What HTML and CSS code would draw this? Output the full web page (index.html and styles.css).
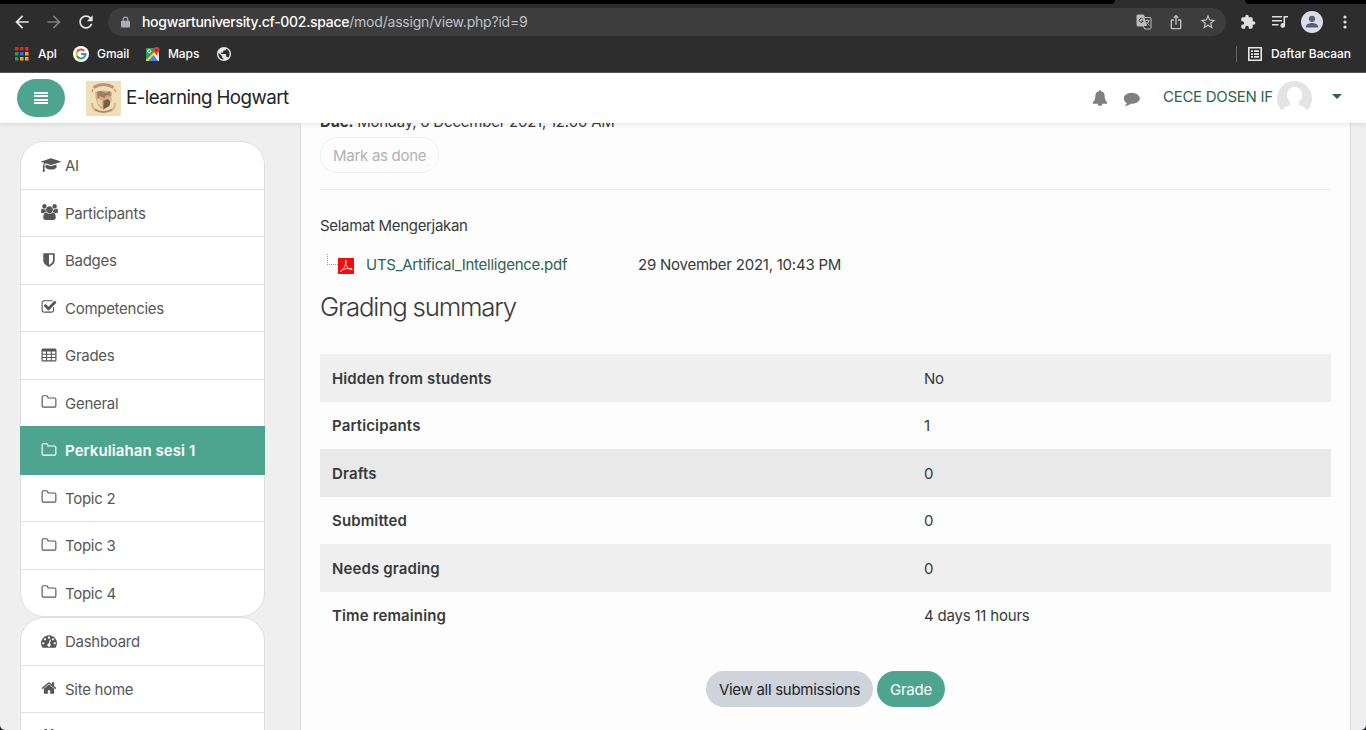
FILE: index.html
```html
<!DOCTYPE html>
<html lang="en">
<head>
<meta charset="utf-8">
<title>E-learning Hogwart</title>
<link rel="stylesheet" href="styles.css">
</head>
<body>
<svg width="0" height="0" class="defs">
  <symbol id="folder" viewBox="0 0 1792 1792"><path d="M1600 1312v-704q0-40-28-68t-68-28h-704q-40 0-68-28t-28-68v-64q0-40-28-68t-68-28h-320q-40 0-68 28t-28 68v960q0 40 28 68t68 28h1216q40 0 68-28t28-68zm128-704v704q0 92-66 158t-158 66h-1216q-92 0-158-66t-66-158v-960q0-92 66-158t158-66h320q92 0 158 66t66 158v32h672q92 0 158 66t66 158z"/></symbol>
</svg>
<div class="browser">
  <div class="tabs"><span class="tabs-left"></span><span class="tabs-right"></span></div>
  <div class="toolbar">
    <svg class="nav" viewBox="0 0 24 24"><path d="M20 11H7.83l5.59-5.59L12 4l-8 8 8 8 1.41-1.41L7.83 13H20z"/></svg>
    <svg class="nav nav-off" viewBox="0 0 24 24"><path d="M12 4l-1.41 1.41L16.17 11H4v2h12.17l-5.58 5.59L12 20l8-8z"/></svg>
    <svg class="nav" viewBox="0 0 24 24"><path d="M17.65 6.35C16.2 4.9 14.21 4 12 4c-4.42 0-7.99 3.58-7.99 8s3.57 8 7.99 8c3.73 0 6.84-2.55 7.73-6h-2.08c-.82 2.33-3.04 4-5.65 4-3.31 0-6-2.69-6-6s2.69-6 6-6c1.66 0 3.14.69 4.22 1.78L13 11h7V4z"/></svg>
    <div class="omnibox">
      <svg class="lock" viewBox="0 0 10 12"><path d="M1 4.500h8a1 1 0 0 1 1 1V11a1 1 0 0 1-1 1H1a1 1 0 0 1-1-1V5.500a1 1 0 0 1 1-1z"/><path d="M2.500 5V3a2.500 2.500 0 0 1 5 0v2" class="lock-ring"/></svg>
      <span class="url"><b>hogwartuniversity.cf-002.space</b>/mod/assign/view.php?id=9</span>
      <svg class="oi" viewBox="0 0 16 16"><path d="M1.500 1h6l1 2.500H14a1 1 0 0 1 1 1V14a1 1 0 0 1-1 1H8.500l-1-3H2a1 1 0 0 1-1-1V1.500z" fill="none" stroke="#bdbdbd"/><path d="M1 1h6.700l3.200 11H2a1 1 0 0 1-1-1z" fill="#bdbdbd"/><path d="M7 5.200A2 2 0 1 0 7.200 7H5.300" fill="none" stroke="#3d3d3d"/><path d="M9.500 6.500h4M11.500 5.500v1M13 6.500q-.8 3-3 4M10.500 8q1 2 3 3.500" fill="none" stroke="#bdbdbd"/></svg>
      <svg class="oi" viewBox="0 0 24 24"><path d="M16 5l-1.420 1.420-1.590-1.590V16h-1.980V4.830L9.420 6.420 8 5l4-4 4 4zm4 5v11c0 1.100-.9 2-2 2H6c-1.110 0-2-.9-2-2V10c0-1.110.89-2 2-2h3v2H6v11h12V10h-3V8h3c1.100 0 2 .89 2 2z"/></svg>
      <svg class="oi star" viewBox="0 0 24 24"><path d="M22 9.240l-7.190-.62L12 2 9.190 8.630 2 9.240l5.460 4.730L5.820 21 12 17.270 18.180 21l-1.630-7.030zM12 15.400l-3.760 2.270 1-4.280-3.320-2.880 4.380-.38L12 6.100l1.710 4.040 4.380.38-3.320 2.880 1 4.280z"/></svg>
    </div>
    <svg class="ext puzzle" viewBox="0 0 24 24"><path d="M20.500 11H19V7c0-1.100-.9-2-2-2h-4V3.500C13 2.120 11.880 1 10.500 1S8 2.120 8 3.500V5H4c-1.100 0-1.990.9-1.990 2v3.800H3.500c1.490 0 2.700 1.210 2.700 2.700s-1.210 2.700-2.700 2.700H2V20c0 1.100.9 2 2 2h3.800v-1.500c0-1.490 1.210-2.700 2.700-2.700s2.700 1.210 2.700 2.700V22H17c1.100 0 2-.9 2-2v-4h1.500c1.380 0 2.500-1.120 2.500-2.500S21.880 11 20.500 11z"/></svg>
    <svg class="ext queue" viewBox="0 0 16 14"><path d="M0 1h10v1.600H0zM0 5h10v1.600H0zM0 9h6.500v1.600H0zM11.500 1H16v1.600h-2.900V10.500a2.300 2.300 0 1 1-1.600-2.200z"/></svg>
    <svg class="user" viewBox="0 0 22 22"><circle cx="11" cy="11" r="11" fill="#dadde6"/><circle cx="11" cy="7.800" r="3.100" fill="#56617a"/><path d="M5 16.500v-1.500c0-2 4-3.100 6-3.100s6 1.100 6 3.100v1.500z" fill="#56617a"/></svg>
    <svg class="dots" viewBox="0 0 4 14"><circle cx="2" cy="2" r="1.600"/><circle cx="2" cy="7" r="1.600"/><circle cx="2" cy="12" r="1.600"/></svg>
  </div>
  <div class="bookmarks">
    <svg class="apps" viewBox="0 0 14 14"><path d="M0 0h3.500v3.500H0zM5 0h3.500v3.500H5zM10 0h3.500v3.500H10z" fill="#e22"/><path d="M0 5h3.500v3.500H0zM0 10h3.500v3.500H0z" fill="#19a05a"/><path d="M5 5h3.500v3.500H5z" fill="#1a73e8"/><path d="M10 5h3.500v3.500H10zM5 10h3.500v3.500H5zM10 10h3.500v3.500H10z" fill="#f9a60a"/></svg>
    <span class="bm apl">Apl</span>
    <svg class="goog" viewBox="0 0 16 16"><circle cx="8" cy="8" r="8" fill="#fff"/><g fill="none" stroke-width="2.100"><path d="M11.300 4.900A4.500 4.500 0 0 0 4 6" stroke="#ea4335"/><path d="M4 6a4.500 4.500 0 0 0 0 4" stroke="#fbbc05"/><path d="M4 10a4.500 4.500 0 0 0 7 1.400" stroke="#34a853"/><path d="M11 11.400A4.500 4.500 0 0 0 12.500 8H8" stroke="#4285f4"/></g></svg>
    <span class="bm gmail">Gmail</span>
    <svg class="maps" viewBox="0 0 15 15"><path d="M1 1h13v13H1z" fill="#2b9f57"/><path d="M1 14L8 7l6 7z" fill="#4285f4"/><path d="M8 7l6-6v13z" fill="#e3e3e3"/><path d="M1 13L12 2l1.500 1.500L3 14H1z" fill="#fdd13a"/><path d="M8 7l1.500 1.200L14 13v1h-1z" fill="#fff"/><circle cx="4.200" cy="4.200" r="1.600" fill="none" stroke="#fff"/><path d="M11.500 9C11.500 6.500 8.500 5.800 8.500 3a3 3 0 0 1 6 0c0 2.800-3 3.500-3 6z" fill="#e53935"/><circle cx="11.500" cy="3" r="1" fill="#8d1b1b"/></svg>
    <span class="bm mapst">Maps</span>
    <svg class="globe" viewBox="2 2 20 20"><path d="M12 2C6.480 2 2 6.480 2 12s4.480 10 10 10 10-4.480 10-10S17.520 2 12 2zm-1 17.930c-3.950-.49-7-3.850-7-7.930 0-.62.080-1.210.21-1.790L9 15v1c0 1.100.9 2 2 2v1.930zm6.900-2.540c-.26-.81-1-1.390-1.900-1.390h-1v-3c0-.55-.45-1-1-1H8v-2h2c.55 0 1-.45 1-1V7h2c1.100 0 2-.9 2-2v-.41c2.930 1.190 5 4.060 5 7.410 0 2.080-.8 3.970-2.100 5.390z"/></svg>
    <span class="divider"></span>
    <svg class="list" viewBox="0 0 14 14"><path d="M.8.8h12.400v12.400H.8z" fill="none" stroke="#e8e8e8" stroke-width="1.600"/><path d="M3 3.300h2v1.700H3zM6 3.300h5v1.700H6zM3 6.200h2v1.700H3zM6 6.200h5v1.700H6zM3 9.100h2v1.700H3zM6 9.100h5v1.700H6z"/></svg>
    <span class="bm daftar">Daftar Bacaan</span>
  </div>
</div>
<header class="site">
  <button class="burger"><i></i><i></i><i></i><i></i></button>
  <svg class="crest" viewBox="0 0 35 35"><rect width="35" height="35" fill="#f1dfb9"/><g fill="none" stroke="#b99671"><path d="M7.500 6.500q10-6 20 0" stroke-width="3"/><path d="M7 8l-1 3M28 8l2 3" stroke-width="1.200"/><path d="M6 22q0 6 5 8M29 22q0 6-5 8" stroke-width="2.500" stroke="#dcbd90"/><path d="M9 28.500q8.500 5 17 0" stroke-width="2" stroke="#ad8863"/></g><path d="M9 11q8-3 17 0l-1 7q-1 8-7.500 11Q11 26 10 18z" fill="#cfae83"/><path d="M11 11q3-2 6 0t7-1l1 5-4-1-3 3-4-2-2 3z" fill="#a17d5d"/><path d="M11 18l5 1v7l-4-3z" fill="#e8cf9f"/><path d="M17.500 20l4-2 3 2-1 5-6 3z" fill="#7c5b4a"/><path d="M22 17l4 0-1 5z" fill="#d9b889"/></svg>
  <span class="brand">E-learning Hogwart</span>
  <svg class="bell" viewBox="0 0 1792 1792"><path d="M1728 1408q0 52-38 90t-90 38h-448q0 106-75 181t-181 75-181-75-75-181h-448q-52 0-90-38t-38-90q50-42 91-88t85-119.500 74.500-158.500 50-206 19.500-260q0-152 117-282.500t307-158.500q-8-19-8-39 0-40 28-68t68-28 68 28 28 68q0 20-8 39 190 28 307 158.500t117 282.500q0 139 19.500 260t50 206 74.500 158.500 85 119.500 91 88z"/></svg>
  <svg class="chat" viewBox="0 0 1792 1792"><path d="M1792 896q0 174-120 321.500t-326 233-450 85.500q-70 0-145-8-198 175-460 242-49 14-114 22h-5q-15 0-27-10.500t-16-27.500q0-20 20-43 30-32 70-76 50-60 86-185-157-89-247.500-220t-90.500-281q0-130 71-248.500t191-204.500 286-136.500 348-50.500 348 50.500 286 136.500 191 204.500 71 248.500z"/></svg>
  <span class="who">CECE DOSEN IF</span>
  <svg class="avatar" viewBox="0 0 35 35"><clipPath id="round"><circle cx="17.500" cy="17.500" r="17.500"/></clipPath><g clip-path="url(#round)"><rect width="35" height="35" fill="#e4e4e4"/><ellipse cx="17.500" cy="14" rx="7.700" ry="8.300" fill="#fff"/><path d="M13 19h9v5q5 1.500 8 5v7H5v-7q3-3.500 8-5z" fill="#fff"/></g></svg>
  <span class="caret"></span>
</header>
<div class="page">
  <nav class="side">
    <ul class="menu">
      <li><svg class="fa cap" viewBox="0 0 2304 1792"><path d="M1774 836l18 316q4 69-82 128t-235 93.500-323 34.500-323-34.500-235-93.500-82-128l18-316 574 181q22 7 48 7t48-7zm530-324q0 23-22 31l-1120 352q-4 1-10 1t-10-1l-652-206q-43 34-71 111.500t-34 178.500q63 36 63 109 0 69-58 107l58 433q2 14-8 25-9 11-24 11h-192q-15 0-24-11-10-11-8-25l58-433q-58-38-58-107 0-73 65-111 11-207 98-330l-333-104q-22-8-22-31t22-31l1120-352q4-1 10-1t10 1l1120 352q22 8 22 31z"/></svg>AI</li>
      <li><svg class="fa wide" viewBox="0 0 1920 1792"><path d="M593 896q-162 5-265 128h-134q-82 0-138-40.500t-56-118.500q0-353 124-353 6 0 43.500 21t97.500 42.500 119 21.500q67 0 133-23-5 37-5 66 0 139 81 256zm1071 637q0 120-73 189.500t-194 69.500h-874q-121 0-194-69.500t-73-189.500q0-53 3.500-103.500t14-109 26.500-108.500 43-97.500 62-81 85.500-53.500 111.500-20q10 0 43 21.500t73 48 107 48 135 21.500 135-21.500 107-48 73-48 43-21.500q61 0 111.500 20t85.500 53.500 62 81 43 97.500 26.500 108.500 14 109 3.500 103.500zm-1024-1277q0 106-75 181t-181 75-181-75-75-181 75-181 181-75 181 75 75 181zm704 384q0 159-112.500 271.500t-271.500 112.500-271.500-112.500-112.500-271.500 112.500-271.500 271.500-112.500 271.500 112.500 112.500 271.500zm576 225q0 78-56 118.500t-138 40.500h-134q-103-123-265-128 81-117 81-256 0-29-5-66 66 23 133 23 59 0 119-21.500t97.500-42.500 43.500-21q124 0 124 353zm-128-609q0 106-75 181t-181 75-181-75-75-181 75-181 181-75 181 75 75 181z"/></svg>Participants</li>
      <li><svg class="fa" viewBox="0 0 1792 1792"><path d="M1344 960v-640h-448v1137q119-63 213-137 235-184 235-360zm192-768v768q0 86-33.500 170.500t-83 150-118 127.500-126.500 103-121 77.500-89.500 49.500-42.500 20q-12 6-26 6t-26-6q-16-7-42.500-20t-89.500-49.500-121-77.500-126.500-103-118-127.500-83-150-33.500-170.500v-768q0-26 19-45t45-19h1152q26 0 45 19t19 45z"/></svg>Badges</li>
      <li><svg class="fa" viewBox="192 0 1792 1792"><path d="M1472 930v318q0 119-84.500 203.500t-203.500 84.500h-832q-119 0-203.500-84.500t-84.500-203.500v-832q0-119 84.500-203.500t203.500-84.500h832q63 0 117 25 15 7 18 23 3 17-9 29l-49 49q-10 10-23 10-3 0-9-2-23-6-45-6h-832q-66 0-113 47t-47 113v832q0 66 47 113t113 47h832q66 0 113-47t47-113v-254q0-13 9-22l64-64q10-10 23-10 6 0 12 3 20 8 20 29zm231-489l-814 814q-24 24-57 24t-57-24l-430-430q-24-24-24-57t24-57l110-110q24-24 57-24t57 24l263 263 647-647q24-24 57-24t57 24l110 110q24 24 24 57t-24 57z" transform="translate(190 0)"/></svg>Competencies</li>
      <li><svg class="fa" viewBox="0 0 16 16"><path fill-rule="evenodd" d="M2 1.500h12a1.500 1.500 0 0 1 1.500 1.500v10a1.500 1.500 0 0 1-1.500 1.500H2A1.500 1.500 0 0 1 .5 13V3A1.500 1.500 0 0 1 2 1.500zM1.700 4.500v2.200h3.300V4.500zM6.100 4.500v2.200h3.700V4.500zM10.900 4.500v2.200h3.400V4.500zM1.700 7.800V10h3.300V7.800zM6.100 7.800V10h3.700V7.800zM10.900 7.800V10h3.400V7.800zM1.700 11.100v2.200h3.300v-2.200zM6.100 11.100v2.200h3.700v-2.200zM10.900 11.100v2.200h3.400v-2.200z"/></svg>Grades</li>
      <li><svg class="fa"><use href="#folder"/></svg>General</li>
      <li class="active"><svg class="fa"><use href="#folder"/></svg>Perkuliahan sesi 1</li>
      <li><svg class="fa"><use href="#folder"/></svg>Topic 2</li>
      <li><svg class="fa"><use href="#folder"/></svg>Topic 3</li>
      <li><svg class="fa"><use href="#folder"/></svg>Topic 4</li>
    </ul>
    <ul class="menu">
      <li><svg class="fa" viewBox="0 0 1792 1792"><path d="M384 1152q0-53-37.500-90.500t-90.500-37.500-90.500 37.500-37.500 90.500 37.500 90.500 90.500 37.500 90.500-37.500 37.500-90.500zm192-448q0-53-37.500-90.500t-90.500-37.500-90.500 37.500-37.500 90.500 37.500 90.500 90.500 37.500 90.500-37.500 37.500-90.500zm428 481l101-382q6-26-7.500-48.500t-38.500-29.500-48 6.500-30 39.500l-101 382q-60 5-107 43.500t-63 98.500q-20 77 20 146t117 89 146-20 89-117q16-60-6-117t-72-91zm660-33q0-53-37.500-90.500t-90.500-37.500-90.500 37.500-37.500 90.500 37.500 90.500 90.500 37.500 90.500-37.500 37.500-90.500zm-640-640q0-53-37.500-90.500t-90.500-37.500-90.500 37.500-37.500 90.500 37.500 90.500 90.500 37.500 90.500-37.500 37.500-90.500zm448 192q0-53-37.500-90.500t-90.500-37.500-90.500 37.500-37.500 90.500 37.500 90.500 90.500 37.500 90.500-37.500 37.500-90.500zm320 448q0 261-141 483-19 29-54 29h-1402q-35 0-54-29-141-221-141-483 0-182 71-348t191-286 286-191 348-71 348 71 286 191 191 286 71 348z"/></svg>Dashboard</li>
      <li><svg class="fa" viewBox="0 0 1792 1792"><path d="M1472 992v480q0 26-19 45t-45 19h-384v-384h-256v384h-384q-26 0-45-19t-19-45v-480q0-1 .5-3t.5-3l575-474 575 474q1 2 1 6zm223-69l-62 74q-8 9-21 11h-3q-13 0-21-7l-692-577-692 577q-12 8-24 7-13-2-21-11l-62-74q-8-10-7-23.500t11-21.500l719-599q32-26 76-26t76 26l244 204v-195q0-14 9-23t23-9h192q14 0 23 9t9 23v408l219 182q10 8 11 21.500t-7 23.500z"/></svg>Site home</li>
      <li><svg class="fa" viewBox="0 0 16 16"><path d="M1.500 3h13v13h-13z"/><path d="M3.500 1h2.500v4H3.500zM10 1h2.500v4H10z"/></svg></li>
    </ul>
  </nav>
  <main class="panel">
    <p class="due"><b>Due:</b> Monday, 6 December 2021, 12:00 AM</p>
    <button class="done">Mark as done</button>
    <hr>
    <p class="intro">Selamat Mengerjakan</p>
    <div class="file">
      <span class="branch"></span>
      <svg class="pdf" viewBox="0 0 16 16"><rect width="16" height="16" fill="#f20d0d"/><path d="M7.500 2q1 0 .6 3Q7 9.500 2.500 14q-1-.5 1.500-2Q8 10 13 10.500q2 .5.800 1.300Q10 12 8 7 7 4 7.500 2z" fill="none" stroke="#ffd5d5" stroke-width=".9"/></svg>
      <a>UTS_Artifical_Intelligence.pdf</a>
      <time>29 November 2021, 10:43 PM</time>
    </div>
    <h2>Grading summary</h2>
    <table>
      <tr><th>Hidden from students</th><td>No</td></tr>
      <tr><th>Participants</th><td>1</td></tr>
      <tr class="hover"><th>Drafts</th><td>0</td></tr>
      <tr><th>Submitted</th><td>0</td></tr>
      <tr><th>Needs grading</th><td>0</td></tr>
      <tr><th>Time remaining</th><td>4 days 11 hours</td></tr>
    </table>
    <div class="actions"><button class="btn view">View all submissions</button><button class="btn grade">Grade</button></div>
  </main>
</div>
</body>
</html>
```
FILE: styles.css
```css
* { box-sizing: border-box; }
body { margin: 0; width: 1366px; height: 730px; overflow: hidden; display: flex; flex-direction: column; background: #14242b; font: 15px/22.5px Inter, "Liberation Sans", sans-serif; letter-spacing: -.28px; color: #373a3c; }
button { font: inherit; letter-spacing: inherit; margin: 0; border: 0; }
svg { display: block; flex: none; }
.defs { position: absolute; }

.browser { height: 73px; flex: none; background: #2d2d2d; border-bottom: 1px solid #555; }
.tabs { height: 4px; display: flex; justify-content: space-between; }
.tabs span { background: #000; }
.tabs-left { width: 1115px; border-bottom-right-radius: 5px; }
.tabs-right { width: 121px; border-bottom-left-radius: 5px; }
.toolbar { height: 36px; display: flex; align-items: center; padding-left: 12px; }
.nav { width: 20px; height: 20px; margin-right: 12px; fill: #e8e8e8; }
.nav-off { fill: #7c7c7c; }
.omnibox { width: 1118px; height: 28px; border-radius: 14px; background: #3d3d3d; display: flex; align-items: center; padding-left: 13px; }
.lock { width: 9px; height: 12px; fill: #a9adb5; overflow: visible; }
.lock-ring { fill: none; stroke: #a9adb5; stroke-width: 1.3; }
.url { flex: 1; margin-left: 12px; font-size: 14px; line-height: 20px; color: #bdc1c6; letter-spacing: -.2px; }
.url b { font-weight: 500; color: #fff; letter-spacing: -.3px; }
.oi { width: 16px; height: 16px; margin-right: 16px; fill: #c3c3c3; }
.star { width: 18px; height: 18px; margin-right: 9px; margin-left: -1px; }
.ext { fill: #e0e0e0; }
.puzzle { width: 16px; height: 16px; margin-left: 14px; }
.queue { width: 16px; height: 14px; margin-left: 16px; }
.user { width: 22px; height: 22px; margin-left: 13px; }
.dots { width: 4px; height: 14px; margin-left: 20px; fill: #e0e0e0; }
.bookmarks { height: 28px; display: flex; align-items: center; padding-left: 15px; }
.bm { font-size: 12px; font-weight: 500; line-height: 16px; letter-spacing: -.08px; color: #fff; white-space: nowrap; }
.apps { width: 14px; height: 14px; }
.apl { width: 26px; margin-left: 9px; }
.goog { width: 16px; height: 16px; margin-left: 9px; }
.gmail { width: 40px; margin-left: 8px; }
.maps { width: 15px; height: 15px; margin-left: 8px; }
.mapst { width: 40px; margin-left: 8px; }
.globe { width: 14px; height: 14px; margin-left: 9px; fill: #e4e4e4; }
.divider { width: 1px; height: 16px; margin-left: auto; background: #666; }
.list { width: 14px; height: 14px; margin-left: 11px; fill: #e8e8e8; }
.daftar { width: 81px; margin: 0 14px 0 9px; }

.site { height: 50px; flex: none; background: #fff; display: flex; align-items: center; padding-left: 17px; position: relative; z-index: 2; box-shadow: 0 2px 4px rgba(0, 0, 0, .08); }
.burger { width: 48px; height: 38px; border-radius: 19px; background: #4da58f; padding: 0 17px; display: flex; flex-direction: column; justify-content: center; gap: 1.5px; }
.burger i { height: 2px; background: #fff; }
.crest { width: 35px; height: 35px; margin-left: 21px; }
.brand { margin-left: 5px; margin-bottom: 1px; font-size: 18.75px; line-height: 28px; letter-spacing: -.58px; color: #212529; flex: 1; }
.bell { width: 16px; height: 16px; fill: #7f7f7f; }
.chat { width: 16px; height: 16px; margin-left: 16px; fill: #7f7f7f; }
.who { width: 110px; margin-left: 23px; margin-bottom: 2px; color: #2d6350; white-space: nowrap; }
.avatar { width: 35px; height: 35px; margin-left: 4px; }
.caret { margin: 0 24px 3px 20px; border: 5px solid transparent; border-top-color: #2d6350; border-bottom: 0; }

.page { flex: 1; min-height: 0; background: #efefef; display: flex; overflow: hidden; border-radius: 0 0 5px 5px; }
.side { width: 245px; margin: 18px 35px 0 20px; }
.menu { list-style: none; margin: 0; padding: 0 0 1px; color: #575757; }
.menu li { height: 48.5px; margin-bottom: -1px; border: 1px solid #dfdfdf; background: #fff; display: flex; align-items: center; padding: 2.4px 0 0 20px; }
.menu li:first-child { border-radius: 24px 24px 0 0; }
.menu li:last-child { border-radius: 0 0 24px 24px; }
.menu .active { background: #4da58f; border-color: #4da58f; color: #fff; font-weight: 600; letter-spacing: .08px; position: relative; }
.fa { width: 16px; height: 16px; margin: -3px 8px 0 0; fill: currentColor; }
.wide { width: 17px; margin-right: 7px; }
.cap { width: 20px; margin-right: 4px; }

.panel { width: 1051px; height: 700px; border: 1px solid #dcdcdc; border-top: 0; background: #fdfdfd; padding: 0 19px; }
.due { margin: -12px 0 4px; height: 22px; letter-spacing: -.24px; }
.done { display: block; height: 36px; padding: 2px 12px 0; border: 1px solid #f0f0f0; border-radius: 18px; background: transparent; color: #b1b2b3; white-space: nowrap; }
hr { height: 1px; border: 0; background: #ebebeb; margin: 16px 0 25px; }
.intro { margin: 0; height: 22px; letter-spacing: -.32px; }
.file { display: flex; align-items: center; height: 24px; margin-top: 16px; }
.branch { width: 11px; height: 11px; margin: -12px 0 0 7px; border: dotted #9a9a9a; border-width: 0 0 1px 1px; }
.pdf { width: 16px; height: 16px; margin-top: 1px; }
.file a { width: 272px; margin-left: 12px; color: #2d6350; letter-spacing: -.26px; }
time { letter-spacing: -.23px; }
h2 { margin: 14px 0 31px; font-weight: 300; font-size: 25.8px; line-height: 32px; letter-spacing: -1.2px; }
table { width: 1011px; border-collapse: collapse; table-layout: fixed; }
tr { height: 47.5px; }
tr:nth-child(odd) { background: #efefef; }
tr.hover { background: #e9e9e9; }
th, td { padding: 3px 12px 0; text-align: left; }
tr:nth-child(even) > * { padding-top: 1.5px; }
th { width: 592px; font-weight: 600; letter-spacing: .13px; }
td { letter-spacing: -.2px; }
.actions { display: flex; justify-content: center; gap: 4px; margin-top: 32px; }
.btn { height: 36px; border-radius: 18px; padding: 2px 0 0; text-align: center; white-space: nowrap; }
.view { width: 167px; background: #ced4da; color: #212529; }
.grade { width: 68px; background: #4da58f; color: #fff; }
```
